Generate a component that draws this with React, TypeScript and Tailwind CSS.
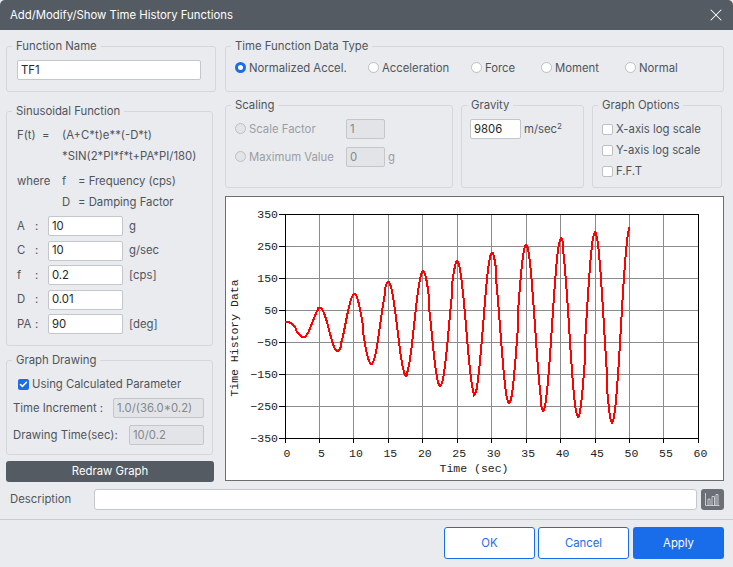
import type { ReactNode } from 'react';
import { Check, X } from 'lucide-react';

const font = { fontFamily: 'Inter, "Noto Sans", sans-serif' };

function Box({ title, className, inner, children }: { title: string; className: string; inner?: string; children?: ReactNode }) {
  return (
    <fieldset className={`rounded-[3px] border border-[#d5d7db] ${className}`}>
      <legend className="ml-[5px] h-4 px-[4px] text-[11.33px] leading-4 text-[#50555b]">{title}</legend>
      <div className={inner}>{children}</div>
    </fieldset>
  );
}

function Field({ value, className, disabled }: { value: string; className: string; disabled?: boolean }) {
  return (
    <div
      className={`flex h-5 items-center rounded-[2px] border px-[3px] text-[11.33px] ${
        disabled ? 'border-[#c3c6ca] bg-[#e2e4e8] text-[#85888d]' : 'border-[#c3c6ca] bg-white text-[#26282b]'
      } ${className}`}
    >
      {value}
    </div>
  );
}

function Radio({ label, checked, disabled }: { label: string; checked?: boolean; disabled?: boolean }) {
  return (
    <div className="flex items-center gap-[3px]">
      {checked ? (
        <span className="h-[11px] w-[11px] rounded-full border-[3px] border-[#1a6dea] bg-white" />
      ) : (
        <span className={`h-[11px] w-[11px] rounded-full border border-[#bcbfc4] ${disabled ? 'bg-[#e2e4e8]' : 'bg-white'}`} />
      )}
      <span className={disabled ? 'text-[#9b9ea3]' : 'text-[#50555b]'}>{label}</span>
    </div>
  );
}

function CheckBox({ label, checked }: { label: string; checked?: boolean }) {
  return (
    <div className="flex h-[21px] items-center gap-[3px]">
      {checked ? (
        <span className="flex h-[11px] w-[11px] items-center justify-center rounded-[2px] bg-[#1a6dea]">
          <Check size={9} strokeWidth={4} className="text-white" />
        </span>
      ) : (
        <span className="h-[11px] w-[11px] rounded-[2px] border border-[#bcbfc4] bg-white" />
      )}
      <span>{label}</span>
    </div>
  );
}

function ParamRow({ label, value, unit }: { label: string; value: string; unit?: string }) {
  return (
    <div className="flex h-5 items-center">
      <span className="w-[18px]">{label}</span>
      <span className="w-[13px]">:</span>
      <Field value={value} className="w-[75px]" />
      <span className="ml-[6px]">{unit}</span>
    </div>
  );
}

function Chart() {
  const px = (t: number) => 285 + t * 6.89;
  const py = (v: number) => 326 - v * 0.32;
  const points: string[] = [];
  const dt = 1 / 7.2;
  for (let t = 0; t <= 50.0001; t += dt) {
    const v = (10 + 10 * t) * Math.exp(-0.01 * t) * Math.sin(2 * Math.PI * 0.2 * t + Math.PI / 2);
    points.push(`${Math.round(px(t))},${Math.round(py(v))}`);
  }
  const xs = [0, 5, 10, 15, 20, 25, 30, 35, 40, 45, 50, 55, 60];
  const ys = [350, 250, 150, 50, -50, -150, -250, -350];
  const label = 'font-["Liberation_Mono"] text-[11.5px]';

  return (
    <div className="h-[285px] w-[499px] border border-[#6d6e72] bg-white">
      <svg viewBox="226 197 497 283" width={497} height={283} className="block">
        <g stroke="#8c8c8c" shapeRendering="crispEdges">
          {xs.slice(1, -1).map((x) => <line key={x} x1={px(x)} x2={px(x)} y1={214} y2={438} />)}
          {ys.slice(1, -1).map((y) => <line key={y} x1={285} x2={698} y1={py(y)} y2={py(y)} />)}
        </g>
        <g stroke="#000" shapeRendering="crispEdges">
          {xs.map((x) => <line key={x} x1={px(x)} x2={px(x)} y1={438} y2={443} />)}
          {ys.map((y) => <line key={y} x1={279} x2={285} y1={py(y)} y2={py(y)} />)}
          <rect x={285} y={214} width={413} height={224} fill="none" />
        </g>
        <polyline points={points.join(' ')} fill="none" stroke="#ff0000" strokeWidth={2} shapeRendering="crispEdges" />
        <g fill="#222" className={label}>
          {ys.map((y) => (
            <text key={y} x={278} y={py(y) + 4} textAnchor="end">
              {y < 0 ? `\u2212${-y}` : y}
            </text>
          ))}
          {xs.map((x) => (
            <text key={x} x={px(x) + 2} y={457} textAnchor="middle">
              {x}
            </text>
          ))}
          <text x={474} y={472} textAnchor="middle">Time (sec)</text>
          <text x={238} y={338} textAnchor="middle" transform="rotate(-90 238 338)">Time History Data</text>
        </g>
      </svg>
    </div>
  );
}

export default function App() {
  return (
    <div className="h-[567px] w-[733px] overflow-hidden bg-[#e9ebef] text-[11.33px] text-[#50555b]" style={font}>
      {/* Title bar */}
      <div className="flex h-[30px] items-center justify-between rounded-t-[5px] bg-[#555b63] pl-[10px] pr-[7px] text-white">
        <span>Add/Modify/Show Time History Functions</span>
        <X size={20} strokeWidth={1.25} />
      </div>

      <div className="flex gap-[9px] pl-[6px] pt-2">
        {/* Left column */}
        <div className="w-[210px]">
          <Box title="Function Name" className="h-[54px]" inner="px-[10px]">
            <Field value="TF1" className="mt-[6px] w-[184px]" />
          </Box>

          <Box title="Sinusoidal Function" className="mt-[11px] h-[243px] w-[207px]" inner="px-[10px]">
            <div className="mt-[6px] flex h-[21px] items-center">
              <span className="w-[45px]">F(t)&nbsp;&nbsp;=</span>
              <span>(A+C*t)e**(-D*t)</span>
            </div>
            <div className="flex h-[21px] items-center pl-[45px]">*SIN(2*PI*f*t+PA*PI/180)</div>
            <div className="mt-[4px] flex h-[21px] items-center">
              <span className="w-[45px]">where</span>
              <span className="w-[16px]">f</span>
              <span>= Frequency (cps)</span>
            </div>
            <div className="flex h-[21px] items-center pl-[45px]">
              <span className="w-[16px]">D</span>
              <span>= Damping Factor</span>
            </div>
            <div className="mt-[3px] flex flex-col gap-[4.6px]">
              <ParamRow label="A" value="10" unit="g" />
              <ParamRow label="C" value="10" unit="g/sec" />
              <ParamRow label="f" value="0.2" unit="[cps]" />
              <ParamRow label="D" value="0.01" />
              <ParamRow label="PA" value="90" unit="[deg]" />
            </div>
          </Box>

          <Box title="Graph Drawing" className="mt-[6px] h-[103px] w-[207px]" inner="pl-[6px] pr-[8px]">
            <div className="mt-[6px] pl-[5px]">
              <CheckBox label="Using Calculated Parameter" checked />
            </div>
            <div className="mt-[3px] flex items-center justify-between">
              <span>Time Increment :</span>
              <Field value="1.0/(36.0*0.2)" disabled className="w-[91px]" />
            </div>
            <div className="mt-[7px] flex items-center justify-between">
              <span>Drawing Time(sec):</span>
              <Field value="10/0.2" disabled className="w-[75px]" />
            </div>
          </Box>

          <button className="mt-[6px] flex h-[21px] w-[208px] items-center justify-center rounded-[3px] bg-[#555b63] text-white">
            Redraw Graph
          </button>
        </div>

        {/* Right column */}
        <div className="w-[499px]">
          <Box title="Time Function Data Type" className="h-[54px]" inner="pl-[9px]">
            <div className="mt-[4px] flex h-5 items-center">
              <div className="w-[133px]"><Radio label="Normalized Accel." checked /></div>
              <div className="w-[103px]"><Radio label="Acceleration" /></div>
              <div className="w-[70px]"><Radio label="Force" /></div>
              <div className="w-[84px]"><Radio label="Moment" /></div>
              <Radio label="Normal" />
            </div>
          </Box>

          <div className="mt-[5px] flex">
            <Box title="Scaling" className="h-[91px] w-[228px]" inner="pl-[9px]">
              <div className="mt-[6px] flex h-5 items-center">
                <div className="w-[111px]"><Radio label="Scale Factor" disabled /></div>
                <Field value="1" disabled className="w-[39px]" />
              </div>
              <div className="mt-2 flex h-5 items-center">
                <div className="w-[111px]"><Radio label="Maximum Value" disabled /></div>
                <Field value="0" disabled className="w-[39px]" />
                <span className="ml-[3px] text-[#9b9ea3]">g</span>
              </div>
            </Box>

            <Box title="Gravity" className="ml-2 h-[91px] w-[123px]" inner="pl-[8px]">
              <div className="mt-[6px] flex items-center gap-[3px]">
                <Field value="9806" className="w-[51px]" />
                <span>m/sec<sup className="text-[8px]">2</sup></span>
              </div>
            </Box>

            <Box title="Graph Options" className="ml-2 h-[91px] w-[130px]" inner="pl-[9px]">
              <div className="mt-[6px]">
                <CheckBox label="X-axis log scale" />
                <CheckBox label="Y-axis log scale" />
                <CheckBox label="F.F.T" />
              </div>
            </Box>
          </div>

          <div className="mt-2">
            <Chart />
          </div>
        </div>
      </div>

      {/* Description */}
      <div className="mt-[7px] flex h-[21px] items-center pl-[10px] pr-[9px]">
        <span className="w-[84px]">Description</span>
        <div className="h-[21px] w-[603px] rounded-[3px] border border-[#c3c6ca] bg-white" />
        <button className="ml-1 flex h-[21px] w-[23px] items-center justify-center rounded-[3px] bg-[#6c7076]">
          <svg width="15" height="13" viewBox="0 0 15 13" fill="none" stroke="#c9ccd0" strokeWidth="1">
            <path d="M.5 0v12.5h14" />
            <path d="M3 12V6h2v6M7 12V3.5h2.5V12M11 12V1.500h2V12" />
          </svg>
        </button>
      </div>

      <div className="mt-[9px] border-t border-[#c9cbd0]" />

      {/* Footer */}
      <div className="mt-[7px] flex justify-end gap-[3px] pr-[9px]">
        <button className="h-8 w-[91px] rounded-[3px] border border-[#1a6dea] bg-white text-[#1a6dea]">OK</button>
        <button className="h-8 w-[91px] rounded-[3px] border border-[#1a6dea] bg-white text-[#1a6dea]">Cancel</button>
        <button className="ml-px h-8 w-[91px] rounded-[3px] bg-[#1a6dea] text-white">Apply</button>
      </div>
    </div>
  );
}
